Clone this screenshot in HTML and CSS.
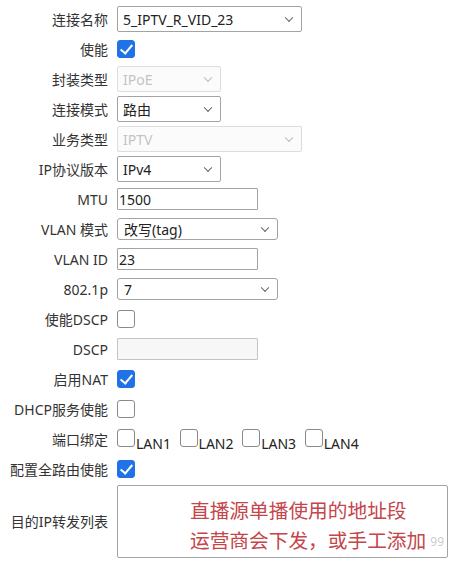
FILE: index.html
```html
<!DOCTYPE html>
<html lang="zh-CN">
<head>
    <meta charset="UTF-8">
    <meta name="viewport" content="width=device-width, initial-scale=1.0">
    <title>WAN 连接配置</title>
    <link rel="stylesheet" href="styles.css">
</head>
<body>
    <form class="wan-form">
        <label class="lbl">连接名称</label>
        <div class="ctl">
            <span class="select lg w185">
                <select><option>5_IPTV_R_VID_23</option></select>
            </span>
        </div>

        <label class="lbl">使能</label>
        <div class="ctl"><input type="checkbox" checked></div>

        <label class="lbl">封装类型</label>
        <div class="ctl">
            <span class="select lg w104 disabled">
                <select disabled><option>IPoE</option></select>
            </span>
        </div>

        <label class="lbl">连接模式</label>
        <div class="ctl">
            <span class="select lg w104">
                <select><option>路由</option></select>
            </span>
        </div>

        <label class="lbl">业务类型</label>
        <div class="ctl">
            <span class="select lg w185 disabled">
                <select disabled><option>IPTV</option></select>
            </span>
        </div>

        <label class="lbl">IP协议版本</label>
        <div class="ctl">
            <span class="select lg w104">
                <select><option>IPv4</option></select>
            </span>
        </div>

        <label class="lbl">MTU</label>
        <div class="ctl"><input class="text" type="text" value="1500"></div>

        <label class="lbl">VLAN 模式</label>
        <div class="ctl">
            <span class="select w161">
                <select><option>改写(tag)</option></select>
            </span>
        </div>

        <label class="lbl">VLAN ID</label>
        <div class="ctl"><input class="text" type="text" value="23"></div>

        <label class="lbl">802.1p</label>
        <div class="ctl">
            <span class="select w161">
                <select><option>7</option></select>
            </span>
        </div>

        <label class="lbl">使能DSCP</label>
        <div class="ctl"><input type="checkbox"></div>

        <label class="lbl">DSCP</label>
        <div class="ctl"><input class="text" type="text" disabled></div>

        <label class="lbl">启用NAT</label>
        <div class="ctl"><input type="checkbox" checked></div>

        <label class="lbl">DHCP服务使能</label>
        <div class="ctl"><input type="checkbox"></div>

        <label class="lbl">端口绑定</label>
        <div class="ctl ports">
            <label class="lan"><input type="checkbox">LAN1</label>
            <label class="lan"><input type="checkbox">LAN2</label>
            <label class="lan"><input type="checkbox">LAN3</label>
            <label class="lan"><input type="checkbox">LAN4</label>
        </div>

        <label class="lbl">配置全路由使能</label>
        <div class="ctl"><input type="checkbox" checked></div>

        <label class="lbl">目的IP转发列表</label>
        <div class="ctl area-wrap">
            <textarea class="area"></textarea>
            <div class="note">直播源单播使用的地址段<br>运营商会下发，或手工添加</div>
            <div class="mark">99</div>
        </div>
    </form>
</body>
</html>
```

FILE: styles.css
```css
body {
    margin: 0;
    background: #fff;
    color: #333;
    font-family: "Noto Sans", "Noto Sans CJK SC", sans-serif;
    font-size: 14px;
}

.wan-form {
    display: grid;
    grid-template-columns: 108px 331px;
    grid-template-rows: repeat(16, 30px) auto;
    column-gap: 9px;
    align-items: center;
    padding-top: 4px;
}

.lbl {
    text-align: right;
    white-space: nowrap;
    color: #333;
}

.ctl {
    display: flex;
    align-items: center;
}

/* selects */
.select {
    position: relative;
    display: inline-block;
}

.select select {
    appearance: none;
    width: 100%;
    height: 22px;
    margin: 0;
    padding: 0 20px 0 6px;
    border: 1px solid #a3a3a3;
    border-radius: 3px;
    background: #fff;
    color: #222;
    font-family: inherit;
    font-size: 14px;
}

.select.lg select {
    height: 26px;
    border-radius: 2px;
    padding-left: 5px;
}

.select::after {
    content: "";
    position: absolute;
    right: 10px;
    top: 50%;
    width: 5px;
    height: 5px;
    border-right: 1px solid #666;
    border-bottom: 1px solid #666;
    transform: translateY(-70%) rotate(45deg);
    pointer-events: none;
}

.select.disabled select {
    background: #fafafa;
    border-color: #cfcfcf;
    color: #aaa;
}

.select.disabled::after {
    border-color: #bbb;
}

.w185 { width: 185px; }
.w161 { width: 161px; }
.w104 { width: 104px; }

/* text inputs */
.text {
    width: 141px;
    height: 22px;
    box-sizing: border-box;
    margin: 0;
    padding: 0 1px;
    border: 1px solid #a3a3a3;
    border-radius: 1px;
    color: #222;
    font-family: inherit;
    font-size: 14px;
}

.text:disabled {
    background: #f7f7f7;
    border-color: #c4c4c4;
}

/* checkboxes */
input[type="checkbox"] {
    appearance: none;
    position: relative;
    width: 18px;
    height: 18px;
    margin: 0;
    border: 1px solid #8a8a8a;
    border-radius: 3px;
    background: #fff;
}

input[type="checkbox"]:checked {
    background: #1f73e6;
    border-color: #1f73e6;
}

input[type="checkbox"]:checked::after {
    content: "";
    position: absolute;
    left: 5px;
    top: 1px;
    width: 5px;
    height: 10px;
    border-right: 2.5px solid #fff;
    border-bottom: 2.5px solid #fff;
    transform: rotate(40deg);
}

.ports {
    display: block;
    padding-top: 4px;
}

.lan {
    margin-right: 5px;
    color: #222;
}

.lan input[type="checkbox"] {
    display: inline-block;
    margin: 0 1px 2px 0;
    vertical-align: baseline;
}

/* forward list */
.area-wrap {
    position: relative;
    margin-top: 1px;
}

.area {
    width: 331px;
    height: 73px;
    box-sizing: border-box;
    margin: 0;
    border: 1px solid #a3a3a3;
    border-radius: 2px;
    resize: none;
}

.note {
    position: absolute;
    left: 73px;
    top: 10px;
    color: #c4454a;
    font-family: "Noto Sans CJK SC", sans-serif;
    font-size: 19.7px;
    line-height: 30px;
    white-space: nowrap;
}

.mark {
    position: absolute;
    right: 4px;
    top: 48px;
    color: rgba(150, 150, 150, 0.5);
    font-size: 12px;
    white-space: nowrap;
}
```
